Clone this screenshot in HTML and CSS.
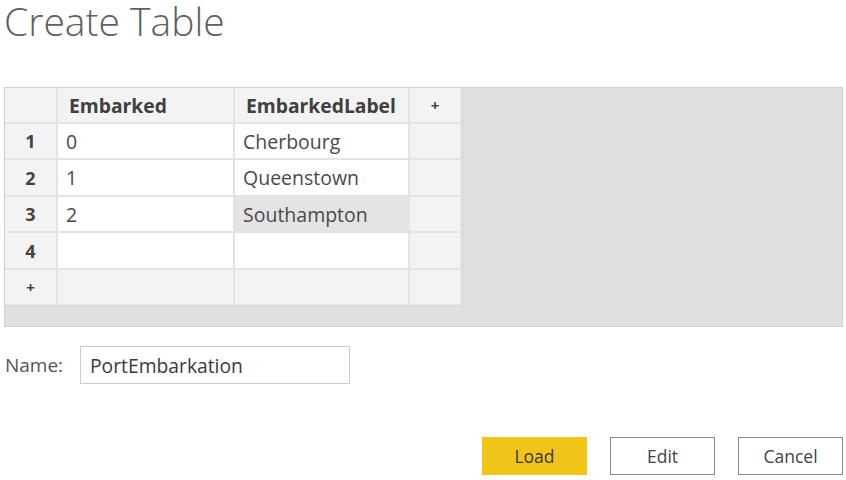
FILE: index.html
```html
<!DOCTYPE html>
<html>
<head>
<meta charset="utf-8">
<link rel="stylesheet" href="styles.css">
</head>
<body>
<div class="dialog">
  <h1 class="title">Create Table</h1>
  <div class="grid-area">
    <div class="grid">
      <div class="cell hdr corner"></div>
      <div class="cell hdr col">Embarked</div>
      <div class="cell hdr col">EmbarkedLabel</div>
      <div class="cell hdr plus">+</div>

      <div class="cell hdr rownum">1</div>
      <div class="cell data">0</div>
      <div class="cell data">Cherbourg</div>
      <div class="cell hdr"></div>

      <div class="cell hdr rownum">2</div>
      <div class="cell data">1</div>
      <div class="cell data">Queenstown</div>
      <div class="cell hdr"></div>

      <div class="cell hdr rownum">3</div>
      <div class="cell data">2</div>
      <div class="cell data selected">Southampton</div>
      <div class="cell hdr"></div>

      <div class="cell hdr rownum">4</div>
      <div class="cell data"></div>
      <div class="cell data"></div>
      <div class="cell hdr"></div>

      <div class="cell hdr plus">+</div>
      <div class="cell hdr"></div>
      <div class="cell hdr"></div>
      <div class="cell hdr"></div>
    </div>
  </div>
  <div class="name-row">
    <label class="name-label">Name:</label>
    <div class="name-input">PortEmbarkation</div>
  </div>
  <div class="buttons">
    <button class="btn primary">Load</button>
    <button class="btn">Edit</button>
    <button class="btn">Cancel</button>
  </div>
</div>
</body>
</html>
```

FILE: styles.css
```css
html, body {
  margin: 0;
  padding: 0;
  background: #ffffff;
}
body {
  font-family: "Open Sans", "Noto Sans", sans-serif;
  color: #3b3b3b;
  width: 846px;
  height: 480px;
  overflow: hidden;
}
.dialog {
  padding: 0 3px 0 4px;
}
.title {
  margin: 0;
  padding: 0;
  font-weight: 300;
  font-size: 39px;
  line-height: 41px;
  height: 87px;
  color: #606060;
}
.grid-area {
  box-sizing: border-box;
  width: 839px;
  height: 240px;
  background: #e0e0e0;
  border: 1px solid #d3cfca;
}
.grid {
  display: grid;
  grid-template-columns: 53px 177px 175px 52px;
  grid-template-rows: 36px 36px 37px 36px 37px 36px;
  width: max-content;
  border-right: 1px dotted #c8c4bf;
  border-bottom: 1px dotted #c8c4bf;
}
.cell {
  box-sizing: border-box;
  border-right: 2px solid #e4e4e4;
  border-bottom: 2px solid #e4e4e4;
  display: flex;
  align-items: center;
  font-size: 19.5px;
  padding-left: 8px;
  white-space: nowrap;
}
.hdr {
  background: #f3f3f3;
}
.col {
  font-weight: 700;
  font-size: 19.3px;
  color: #404040;
  padding-left: 11px;
}
.plus {
  justify-content: center;
  padding-left: 0;
  font-size: 15px;
  font-weight: 700;
  color: #444;
}
.rownum {
  justify-content: center;
  padding-left: 0;
  padding-right: 0;
  font-weight: 700;
  font-size: 18px;
  color: #444;
}
.data {
  background: #ffffff;
  color: #4a4a4a;
}
.selected {
  background: #e4e4e4;
}
.name-row {
  display: flex;
  align-items: center;
  margin-top: 19px;
  height: 38px;
}
.name-label {
  font-size: 19px;
  color: #555;
  width: 75px;
  padding-left: 1px;
}
.name-input {
  box-sizing: border-box;
  width: 270px;
  height: 38px;
  border: 1px solid #cfcbc6;
  display: flex;
  align-items: center;
  padding-left: 9px;
  font-size: 19.3px;
  color: #3b3b3b;
}
.buttons {
  display: flex;
  justify-content: flex-end;
  gap: 23px;
  margin-top: 53px;
  width: 839px;
}
.btn {
  box-sizing: border-box;
  width: 105px;
  height: 38px;
  border: 1px solid #8f8a86;
  background: #ffffff;
  font-family: "Open Sans", "Noto Sans", sans-serif;
  font-size: 17.5px;
  color: #424242;
  padding: 0;
}
.btn.primary {
  background: #f0c419;
  border-color: #f0c419;
  color: #3a3a3a;
}
```
